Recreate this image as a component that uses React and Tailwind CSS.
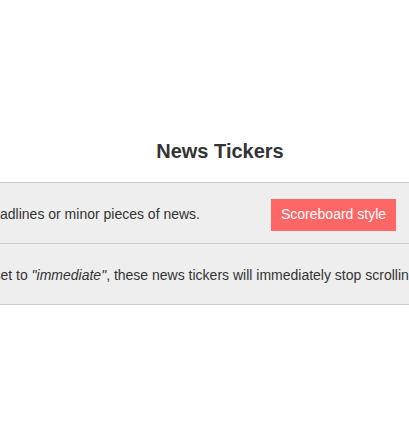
import React from "react";

export default function App() {
  return (
    <div className="w-full h-[446px] overflow-hidden bg-white font-['Liberation_Sans',Arial,sans-serif] text-[#333]">
      <div className="w-[440px] pt-[139px]">
        <h2 className="text-center text-[20px] font-bold leading-6 text-[#333]">News Tickers</h2>

        <div className="mt-[19px] border-t border-[#ccc] text-[14px]">
          <div className="flex h-[61px] items-center border-b border-[#ccc] bg-[#eee] pt-[3px]">
            <div className="flex w-[200px] shrink-0 justify-end whitespace-nowrap">
              <span>Scrolling tickers are perfect for headlines or minor pieces of news.</span>
            </div>
            <button className="ml-[71px] h-[32px] shrink-0 bg-[#ff6666] px-[10px] text-[14px] text-white">
              Scoreboard style
            </button>
          </div>

          <div className="flex h-[61px] items-center border-b border-[#ccc] bg-[#eee] pt-[3px] whitespace-nowrap">
            <span className="ml-[-47px]">
              When set to <em>"immediate"</em>, these news tickers will immediately stop scrolling on hover.
            </span>
          </div>
        </div>
      </div>
    </div>
  );
}
